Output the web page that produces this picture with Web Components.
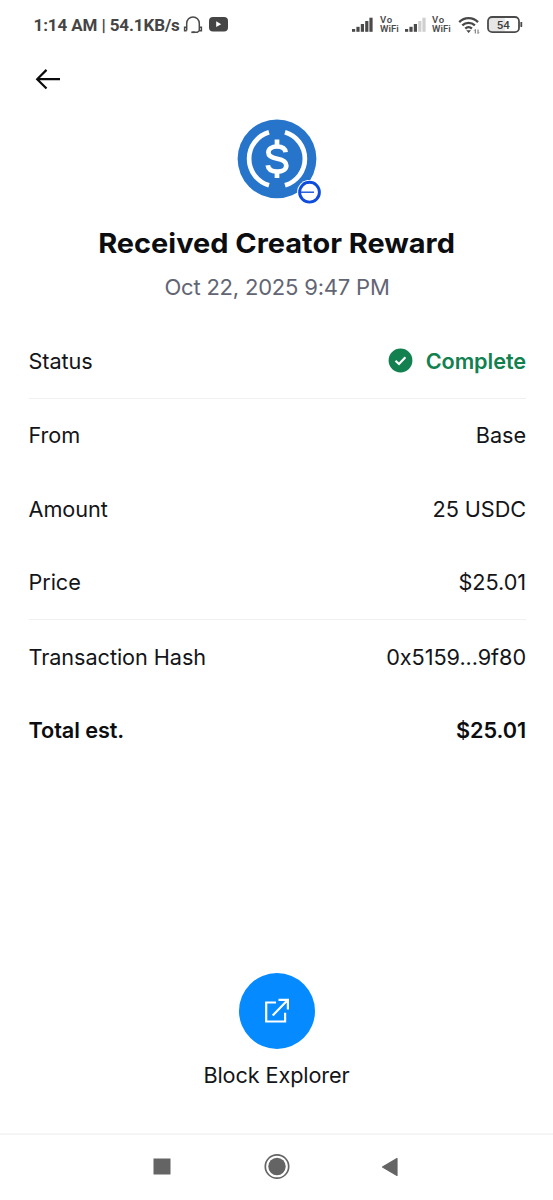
<!DOCTYPE html>
<html lang="en"><head><meta charset="utf-8"><title>Transaction</title>
<style>
html,body{margin:0;height:100%;background:#fff}
body{font-family:Inter,"Noto Sans",sans-serif;color:#141519}
</style></head><body>
<tx-screen></tx-screen>
<script>
const define=(name,html)=>{
  const t=document.createElement('template');t.innerHTML=html;
  customElements.define(name,class extends HTMLElement{
    constructor(){super();this.attachShadow({mode:'open'}).appendChild(t.content.cloneNode(true));}
  });
};

define('signal-bars',`<style>:host{display:block;width:22px;height:16px}svg{display:block}:host([weak]) .hi{fill:#cfcfcf}</style>
<svg width="22" height="16" viewBox="0 0 22 16" fill="#4a4a4a"><rect x="0" y="12" width="3.2" height="2.8"/><rect x="4.4" y="9.8" width="3.2" height="5"/><rect x="8.8" y="7" width="3.2" height="7.8"/><rect class="hi" x="13.2" y="4" width="3.2" height="10.8"/><rect class="hi" x="17.4" y=".7" width="3.2" height="14.1"/></svg>`);

define('vo-wifi',`<style>:host{display:flex;flex-direction:column;width:20px;font:600 9.6px/9px Roboto,sans-serif;color:#4c4c4c}
span{white-space:nowrap;display:block}.v{letter-spacing:.7px}</style><span class="v">Vo</span><span>WiFi</span>`);

define('status-bar',`<style>:host{display:flex;justify-content:space-between;height:50px;box-sizing:border-box;padding:0 30px 0 33.5px;color:#454545}
div{display:flex;align-items:flex-start}svg{display:block}
.t{font:700 17px/20px Roboto,sans-serif;white-space:nowrap;margin-top:15px;letter-spacing:-.11px}
.h{margin:15px 0 0 3px}.y{margin:17px 0 0 6px}
signal-bars{margin-top:17px}vo-wifi{margin:15px 0 0 6px}.s2{margin-left:5px}.v2{margin-left:5px}
.w{margin:15px 0 0 6px}.b{margin:16px 0 0 6px}</style>
<div><span class="t">1:14 AM | 54.1KB/s</span>
<svg class="h" width="20" height="19" viewBox="0 0 20 19" fill="none" stroke="#4a4a4a" stroke-width="1.5"><path d="M3.7 15.5V8.5a6.3 6.6 0 0 1 12.6 0v7M3.7 12.3H1.6v3.4h2.1M16.3 12.3h2.1v3.4h-2.1l-2 1.6H9.5"/><rect x="8.3" y="16.4" width="3.4" height="1.7" fill="#4a4a4a" stroke="none"/></svg>
<svg class="y" width="19" height="15" viewBox="0 0 19 15"><rect width="19" height="14.5" rx="4" fill="#454545"/><path d="M7.2 4.3v5.8l5-2.9z" fill="#fff"/></svg></div>
<div><signal-bars></signal-bars><vo-wifi></vo-wifi><signal-bars class="s2" weak></signal-bars><vo-wifi class="v2"></vo-wifi>
<svg class="w" width="23" height="20" viewBox="0 0 23 20" fill="none" stroke="#484848" stroke-width="2.3"><path d="M1.2 7.1a13.3 13.3 0 0 1 18.8 0M4.3 10.4a9 9 0 0 1 12.6 0M7.3 13.6a4.7 4.7 0 0 1 6.6 0"/><path d="M8.2 15.3h4.8L10.6 18z" fill="#484848" stroke="none"/><path d="M17.3 18.5v-4l-1 1M20 14.5v4l1-1" stroke-width=".8"/></svg>
<svg class="b" width="36" height="18" viewBox="0 0 36 18"><rect x="1.8" y="1.8" width="16.5" height="13.6" rx="3" fill="#e6e6e6"/><rect x="1" y="1" width="31" height="15.2" rx="4.2" fill="none" stroke="#4a4a4a" stroke-width="1.8"/><rect x="33.4" y="6" width="1.8" height="5" rx=".6" fill="#4a4a4a"/><text x="16.3" y="12.9" text-anchor="middle" font-family="Roboto" font-size="11.5" font-weight="500" fill="#3d3d3d">54</text></svg></div>`);

define('back-button',`<style>:host{display:block;padding:19px 0 0 35px;height:50px}svg{display:block}</style>
<svg width="26" height="21" viewBox="0 0 26 21" fill="none" stroke="#0b0b0d" stroke-width="2.2"><path d="M2 10.2h23M11.5.9L2.2 10.2l9.3 9.3"/></svg>`);

define('usdc-coin',`<style>:host{display:block;position:relative;width:80px;height:80px}svg{display:block}.n{position:absolute;left:60.6px;top:60.6px}</style>
<svg width="80" height="80" viewBox="0 0 80 80"><circle cx="40" cy="39.8" r="39.4" fill="#2775ca"/><g fill="none" stroke="#fff" stroke-width="4.7"><path d="M32 13.3A27.6 27.6 0 0 0 32 66.3M48 13.3A27.6 27.6 0 0 1 48 66.3"/><path d="M48.6 33.2C48.2 29.3 44.8 27.5 40 27.5c-5.1 0-8.6 2.3-8.6 6 0 4.2 4.2 5.4 8.9 6.2 5.4 1 9 2.4 9 6.7 0 4-3.9 6.2-9.1 6.2-5.4 0-8.9-2.1-9.4-6.3"/><path d="M40 20.5v7.2M40 52.3v6.8"/></g></svg>
<svg class="n" width="26" height="26" viewBox="0 0 26 26"><circle cx="12.5" cy="12.2" r="12.4" fill="#fff"/><circle cx="12.5" cy="12.2" r="9.9" fill="#fff" stroke="#0f4bdc" stroke-width="2.9"/><path d="M3 12.2h14" stroke="#1450d8" stroke-width="1.4"/></svg>`);

define('tx-summary',`<style>:host{display:flex;flex-direction:column;align-items:center}
h1{font-size:27.5px;line-height:34px;font-weight:650;letter-spacing:0;transform:scaleX(1.052);margin:27px 0 0;color:#0c0d10;white-space:nowrap}
p{font-size:22px;line-height:28px;margin:13px 0 0;color:#626574;letter-spacing:-.2px;white-space:nowrap;padding-left:1px}</style>
<usdc-coin></usdc-coin><h1><slot name="title"></slot></h1><p><slot name="date"></slot></p>`);

define('detail-row',`<style>:host{display:flex;justify-content:space-between;align-items:center;height:73.5px;font-size:21.7px;letter-spacing:-.08px;line-height:28px;white-space:nowrap}
:host([divided]){border-bottom:1.5px solid #f0f0f1}:host([strong]){font-weight:600;color:#0c0d10}</style>
<span><slot name="label"></slot></span><span><slot></slot></span>`);

define('complete-badge',`<style>:host{display:flex;align-items:center;gap:13px;color:#12814f;font-weight:600}svg{display:block}</style>
<svg width="25" height="25" viewBox="0 0 25 25"><circle cx="12.5" cy="12.5" r="11.9" fill="#12814f"/><path d="M7.5 12.7l3.5 3.3 6.4-6.7" fill="none" stroke="#fff" stroke-width="2.2"/></svg><span><slot></slot></span>`);

define('explorer-action',`<style>:host{display:flex;flex-direction:column;align-items:center;font-size:21.7px;letter-spacing:-.12px;line-height:28px}
.c{width:76px;height:76px;border-radius:50%;background:#058bff;display:flex;align-items:center;justify-content:center;margin-bottom:12px}svg{display:block}</style>
<div class="c"><svg width="26" height="26" viewBox="0 0 26 26" fill="none" stroke="#fff" stroke-width="2.2"><path d="M12 4.5H2.2v19h18.9v-8.7M8.7 17.5L23.5 2.3M14.5 1.9h9.4v9.5"/></svg></div><slot></slot>`);

define('nav-bar',`<style>:host{display:grid;grid-template-columns:163px 227px 163px;border-top:2px solid #f5f5f5;height:67px;box-sizing:border-box;align-items:center;padding-bottom:2px}
svg{display:block}.r{margin-left:153px}.h{justify-self:center}.b{margin-left:-10px}</style>
<svg class="r" width="18" height="17" viewBox="0 0 18 17"><rect x=".5" y=".5" width="17" height="16" fill="#646464"/></svg>
<svg class="h" width="27" height="27" viewBox="0 0 27 27"><circle cx="14" cy="13.5" r="11.7" fill="none" stroke="#646464" stroke-width="1.7"/><circle cx="14" cy="13.5" r="8.7" fill="#646464"/></svg>
<svg class="b" width="18" height="20" viewBox="0 0 18 20"><path d="M2.5 10L17 1.5v17z" fill="#646464" stroke="#646464" stroke-width="1.2" stroke-linejoin="round"/></svg>`);

define('tx-screen',`<style>:host{display:flex;flex-direction:column;height:1200px;overflow:hidden}
section{padding:23px 27px 0 28.5px}explorer-action{margin-top:auto;margin-bottom:44px}</style>
<status-bar></status-bar><back-button></back-button>
<tx-summary><span slot="title">Received Creator Reward</span><span slot="date">Oct 22, 2025 9:47 PM</span></tx-summary>
<section>
<detail-row divided><span slot="label">Status</span><complete-badge>Complete</complete-badge></detail-row>
<detail-row><span slot="label">From</span>Base</detail-row>
<detail-row><span slot="label">Amount</span>25 USDC</detail-row>
<detail-row divided><span slot="label">Price</span>$25.01</detail-row>
<detail-row><span slot="label">Transaction Hash</span>0x5159...9f80</detail-row>
<detail-row strong><span slot="label">Total est.</span>$25.01</detail-row>
</section>
<explorer-action>Block Explorer</explorer-action><nav-bar></nav-bar>`);
</script></body></html>
